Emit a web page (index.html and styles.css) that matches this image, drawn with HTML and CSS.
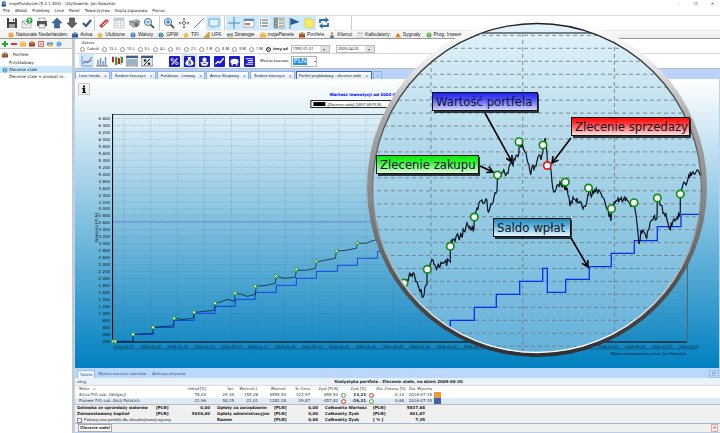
FILE: index.html
```
<!DOCTYPE html>
<html lang="pl">
<head>
<meta charset="utf-8">
<title>mojeFundusze</title>
<link rel="stylesheet" href="styles.css">
</head>
<body>
<svg class="defs" aria-hidden="true">
  <symbol id="save" viewBox="0 0 12 12"><path d="M1 1h9l1 1v9H1z" fill="#3f4348"/><path d="M3 1h6v4H3z" fill="#e9edf0"/><path d="M3 7h6v4H3z" fill="#9aa4ab"/><path d="M7 2h1v2H7z" fill="#333"/></symbol>
  <symbol id="mail" viewBox="0 0 12 12"><path d="M1 4h9v7H1z" fill="#eceff0" stroke="#8b9497" stroke-width=".6"/><path d="M1 4l4.500 4L10 4" fill="none" stroke="#8b9497" stroke-width=".8"/><circle cx="8.500" cy="3.500" r="3" fill="#22a335"/><path d="M8.500 5.500V2M7 3.300l1.500-1.500L10 3.300" stroke="#fff" fill="none"/></symbol>
  <symbol id="print" viewBox="0 0 12 12"><path d="M3 1h6v4H3z" fill="#f5f5f5" stroke="#777" stroke-width=".6"/><path d="M1 4h10v5H1z" fill="#50555a"/><path d="M3 7h6v4H3z" fill="#f4f4f4" stroke="#666" stroke-width=".6"/></symbol>
  <symbol id="up" viewBox="0 0 12 12"><path d="M6 1l5 5H8.500v5h-5V6H1z" fill="#3e6ca0" stroke="#2b4f7c" stroke-width=".6"/></symbol>
  <symbol id="down" viewBox="0 0 12 12"><path d="M6 11L1 6h2.500V1h5v5H11z" fill="#5d6266" stroke="#3b3e42" stroke-width=".6"/></symbol>
  <symbol id="check" viewBox="0 0 12 12"><path d="M2 6l3 3 5-6" fill="none" stroke="#34608f" stroke-width="2.400"/></symbol>
  <symbol id="eraser" viewBox="0 0 12 12"><path d="M1 9l7-7 3 2-7 7z" fill="#d63a30"/><path d="M4 9l5-5" stroke="#fff"/></symbol>
  <symbol id="calendar" viewBox="0 0 12 12"><path d="M1 1h10v10H1z" fill="#fafafa" stroke="#aaa" stroke-width=".6"/><path d="M1 1h10v3H1z" fill="#b9cadd"/><path d="M1 6h10M1 8.500h10M4 4v7M7.500 4v7" stroke="#bbb" stroke-width=".5"/></symbol>
  <symbol id="scan" viewBox="0 0 12 12"><path d="M1 4l8-2 3 2v4l-6 3-5-3z" fill="#a8adb0"/><path d="M1 4l5 2 6-2" fill="none" stroke="#666" stroke-width=".8"/><circle cx="8.500" cy="8" r="2" fill="#686d70"/></symbol>
  <symbol id="lens" viewBox="0 0 12 12"><path d="M7 7l4 4" stroke="#555" stroke-width="1.800"/><circle cx="5" cy="5" r="3.600" fill="#cfe7f7" stroke="#577c99"/><path d="M3.500 5h3" stroke="#2a72aa"/></symbol>
  <symbol id="lens-plus" viewBox="0 0 12 12"><path d="M7 7l4 4" stroke="#555" stroke-width="1.800"/><circle cx="5" cy="5" r="3.600" fill="#cfe7f7" stroke="#577c99"/><path d="M3 5h4M5 3v4" stroke="#2a72aa"/></symbol>
  <symbol id="move" viewBox="0 0 12 12"><path d="M6 1v10M1 6h10M4.500 2.500L6 1l1.500 1.500M4.500 9.500L6 11l1.500-1.500M2.500 4.500L1 6l1.500 1.500M9.500 4.500L11 6 9.500 7.500" fill="none" stroke="#666" stroke-width=".8"/><circle cx="6" cy="6" r="1.500" fill="#fff" stroke="#555" stroke-width=".7"/></symbol>
  <symbol id="line" viewBox="0 0 12 12"><path d="M1 11L11 1" stroke="#3a8ac0"/></symbol>
  <symbol id="speech" viewBox="0 0 12 12"><path d="M1 2h10v7H7l-2 2V9H1z" fill="#dff2fd" stroke="#4a9ac9" stroke-width=".8"/></symbol>
  <symbol id="cross" viewBox="0 0 12 12"><path d="M6 0v12M0 6h12" stroke="#4286b8"/></symbol>
  <symbol id="panel" viewBox="0 0 12 12"><path d="M1 2h10v8H1z" fill="#fff" stroke="#999" stroke-width=".7"/><path d="M1 2h10v2H1z" fill="#5b8bc0"/><path d="M2 7h5" stroke="#d23c32" stroke-width="1.500"/></symbol>
  <symbol id="list" viewBox="0 0 12 12"><path d="M1 1h10v10H1z" fill="#f5f8fa"/><path d="M4 3h6M4 6h6M4 9h6" stroke="#555"/><path d="M2 3h1M2 6h1M2 9h1" stroke="#222"/></symbol>
  <symbol id="tree" viewBox="0 0 12 12"><path d="M1 1h10v10H1z" fill="#eef0e4" stroke="#777" stroke-width=".6"/><path d="M1 1h4v10H1z" fill="#7d929c"/><path d="M2 3h2M2 6h2M2 9h2" stroke="#e5b448"/><path d="M6 3h4M6 6h4M6 9h4" stroke="#777"/></symbol>
  <symbol id="flag" viewBox="0 0 12 12"><path d="M2 1v11" stroke="#777"/><path d="M2.500 1l9 4-9 3z" fill="#1e5c9e"/></symbol>
  <symbol id="note" viewBox="0 0 12 12"><path d="M2 1l9 2-1 8-9-1z" fill="#f7ec62" stroke="#d4bf3a" stroke-width=".5"/></symbol>
  <symbol id="refresh" viewBox="0 0 12 12"><path d="M2 6V3h6M10 6v3H4" fill="none" stroke="#2f6fb4" stroke-width="1.800"/><path d="M7.500 0L11 3 7.500 6zM4.500 6L1 9l3.500 3z" fill="#2f6fb4"/></symbol>
  <symbol id="ball" viewBox="0 0 12 12"><circle cx="6" cy="6" r="5" fill="currentColor"/><path d="M3 5q3-4 6 0M4 8q3 2 4-1" stroke="#fff" fill="none" stroke-width="1.300"/></symbol>
  <symbol id="star" viewBox="0 0 12 12"><path d="M6 0l2 4 4 .5-3 3 1 4.500-4-2-4 2 1-4.500-3-3L4 4z" fill="currentColor"/></symbol>
  <symbol id="case" viewBox="0 0 12 12"><path d="M4 3V1h4v2" fill="none" stroke="currentColor"/><path d="M0 3h12v8H0z" fill="currentColor"/><path d="M0 6h12" stroke="#fff" stroke-opacity=".4"/></symbol>
  <symbol id="warn" viewBox="0 0 12 12"><path d="M6 1l6 10H0z" fill="#f0a020"/><path d="M6 4v4M6 9v1" stroke="#222" stroke-width="1.300"/></symbol>
  <symbol id="person" viewBox="0 0 12 12"><circle cx="6" cy="3" r="2.500" fill="#c98a4e"/><path d="M2 12q0-6 4-6t4 6z" fill="#4679ae"/></symbol>
  <symbol id="gold" viewBox="0 0 12 12"><path d="M1 8h4V4h3V1h3v10H1z" fill="#e4a028" stroke="#9b681c" stroke-width=".6"/></symbol>
  <symbol id="plus" viewBox="0 0 12 12"><path d="M6 0v12M0 6h12" stroke="#27a52c" stroke-width="4"/></symbol>
  <symbol id="minus" viewBox="0 0 12 12"><path d="M0 6h12" stroke="#dd3b34" stroke-width="4"/></symbol>
  <symbol id="pdf" viewBox="0 0 12 12"><path d="M1 1h10v10H1z" fill="#fff" stroke="#d33" stroke-width="1.500"/><path d="M3 9l3-6 3 5-5-1" fill="none" stroke="#d33"/></symbol>
  <symbol id="folder" viewBox="0 0 12 12"><path d="M0 3h12v6H0z" fill="#3f9fdc"/><path d="M3 6h8v5H3z" fill="#f0bd3d"/></symbol>
  <symbol id="plot" viewBox="0 0 12 12"><path d="M1 1v10h10" fill="none" stroke="#7a9bc0"/><path d="M2 9l3-3 2 1 4-5" fill="none" stroke="#b34cc2"/><path d="M2 6l4 2 5-3" fill="none" stroke="#4b8be0"/></symbol>
  <symbol id="bars" viewBox="0 0 12 12"><path d="M2 11V5M4.500 11V3M7 11V6M9.500 11V2" stroke="#6f95c9" stroke-width="1.500"/><path d="M0 11h12" stroke="#777"/></symbol>
  <symbol id="candles" viewBox="0 0 12 12"><path d="M2 1v7M6 3v7M10 1v9" stroke="#444" stroke-width=".6"/><path d="M1 2h2v5H1z" fill="#b72a24"/><path d="M4 2h2v8H4z" fill="#3e9929"/><path d="M7 3h2v6H7z" fill="#b72a24"/><path d="M10 2h2v6h-2z" fill="#3e9929"/></symbol>
  <symbol id="grid" viewBox="0 0 12 12"><path d="M0 1h12v10H0z" fill="#e6edf3" stroke="#555" stroke-width=".7"/><path d="M0 1h12v2H0z" fill="#3b5f88"/><path d="M1 5h10M1 7h10M1 9h10" stroke="#57779b"/></symbol>
  <symbol id="percent" viewBox="0 0 12 12"><path d="M0 1h12v10H0z" fill="#dfe6ec" stroke="#555" stroke-width=".7"/><path d="M0 1h12v2H0z" fill="#3b5f88"/><path d="M3 10l6-6" stroke="#222"/><circle cx="4" cy="5.500" r="1.200" fill="#222"/><circle cx="8" cy="8.700" r="1.200" fill="#222"/></symbol>
  <symbol id="b-percent" viewBox="0 0 12 12"><path d="M3 9.500l6-7" stroke="#fff" stroke-width="1.300"/><circle cx="3.500" cy="4" r="1.300" fill="none" stroke="#fff"/><circle cx="8.500" cy="8" r="1.300" fill="none" stroke="#fff"/></symbol>
  <symbol id="b-bag" viewBox="0 0 12 12"><path d="M4 1h4L7.500 3.500q3 2 3 4.500T6 10.500 1.500 8 4.500 3.500z" fill="#fff"/><path d="M7.500 5.500H5.200v1.500h2v1.700H4.500" fill="none" stroke="#1b1bc8" stroke-width=".9"/></symbol>
  <symbol id="b-coins" viewBox="0 0 12 12"><circle cx="6" cy="4" r="2.300" fill="#fff"/><path d="M1.500 7q4.500-2 9 0l-2 3.500h-5z" fill="#fff"/><path d="M4 8h4" stroke="#1b1bc8" stroke-width=".9"/></symbol>
  <symbol id="b-chart" viewBox="0 0 12 12"><path d="M1.500 9l3-3 2 1.500 4-5" fill="none" stroke="#fff" stroke-width="1.500"/></symbol>
  <symbol id="b-pig" viewBox="0 0 12 12"><ellipse cx="6" cy="6" rx="4.500" ry="3" fill="#fff"/><path d="M3.500 8v2.500M8.500 8v2.500" stroke="#fff" stroke-width="1.400"/></symbol>
  <symbol id="b-list" viewBox="0 0 12 12"><path d="M2 3h8M4 5h6M4 7h6M2 9h8" stroke="#fff"/></symbol>
</svg>

<div class="app">
  <header class="titlebar">
    <svg class="ico" viewBox="0 0 12 12"><path d="M3 1h6l1 10H1z" fill="#174f86"/><path d="M5 3h3v4H5z" fill="#8fc8e8"/></svg>
    <span class="title">mojeFundusze (5.2.1.400) - Użytkownik: Jan Kowalski</span>
    <button aria-label="Minimalizuj">–</button><button aria-label="Przywróć">❐</button><button aria-label="Zamknij">✕</button>
  </header>
  <nav class="menu">
    <a href="#">Plik</a><a href="#">Widok</a><a href="#">Przebieg</a><a href="#">Linie</a><a href="#">Panel</a><a href="#">Towarzystwo</a><a href="#">Kopia zapasowa</a><a href="#">Pomoc</a>
  </nav>
  <div class="toolbar">
    <div class="group" data-icons="save mail print up down check"></div>
    <div class="group" data-icons="eraser calendar scan lens"></div>
    <div class="group" data-icons="lens-plus move line speech*"></div>
    <div class="group" data-icons="cross* panel* list* tree* flag* note* refresh"></div>
  </div>
  <nav class="bookmarks">
    <a href="#"><svg class="ico orange"><use href="#ball"/></svg>Nationale Nederlanden</a>
    <a href="#"><svg class="ico navy"><use href="#case"/></svg>Aviva</a>
    <a href="#"><svg class="ico amber"><use href="#star"/></svg>Ulubione</a>
    <a href="#"><svg class="ico blue"><use href="#ball"/></svg>Waluty</a>
    <a href="#"><svg class="ico teal"><use href="#ball"/></svg>GPW</a>
    <a href="#"><svg class="ico amber"><use href="#star"/></svg>TFI</a>
    <a href="#"><svg class="ico"><use href="#gold"/></svg>UFK</a>
    <a href="#"><svg class="ico"><use href="#folder"/></svg>Strategie</a>
    <a href="#"><svg class="ico amber"><use href="#case"/></svg>mojePanele</a>
    <a href="#" class="on"><svg class="ico brown"><use href="#case"/></svg>Portfele</a>
    <a href="#"><svg class="ico"><use href="#person"/></svg>Klienci</a>
    <a href="#"><svg class="ico"><use href="#calendar"/></svg>Kalkulatory</a>
    <a href="#"><svg class="ico"><use href="#warn"/></svg>Sygnały</a>
    <a href="#"><svg class="ico green"><use href="#ball"/></svg>Prog. Inwest.</a>
  </nav>

  <div class="body">
    <aside class="sidebar">
      <div class="side-tools">
        <button aria-label="Dodaj"><svg class="ico"><use href="#plus"/></svg></button>
        <button aria-label="Usuń"><svg class="ico"><use href="#minus"/></svg></button>
        <button aria-label="Złoto"><svg class="ico amber"><use href="#case"/></svg></button>
        <button aria-label="Portfel"><svg class="ico brown"><use href="#case"/></svg></button>
        <button aria-label="PDF"><svg class="ico"><use href="#pdf"/></svg></button>
        <button aria-label="Katalog"><svg class="ico"><use href="#folder"/></svg></button>
        <button aria-label="Odśwież"><svg class="ico sky"><use href="#ball"/></svg></button>
      </div>
      <ul class="tree">
        <li><svg class="ico brown"><use href="#case"/></svg><span class="root">Portfele</span></li>
        <li><i class="ico"></i>Przykładowy</li>
        <li class="on"><svg class="ico sky"><use href="#ball"/></svg>Zlecenie stałe</li>
        <li><i class="ico"></i>Zlecenie stałe + produkt in...</li>
      </ul>
    </aside>

    <main class="content">
      <div class="range" role="group" aria-labelledby="range-name">
        <div id="range-name" class="range-name">Zakres</div>
        <div class="range-row">
        <label><input type="radio" name="r">Całość</label>
        <label><input type="radio" name="r">15 L</label>
        <label><input type="radio" name="r">10 L</label>
        <label><input type="radio" name="r">5 L</label>
        <label><input type="radio" name="r">4 L</label>
        <label><input type="radio" name="r">3 L</label>
        <label><input type="radio" name="r">2 L</label>
        <label><input type="radio" name="r">1 R</label>
        <label><input type="radio" name="r">6 M</label>
        <label><input type="radio" name="r">3 M</label>
        <label><input type="radio" name="r">1 M</label>
        <label><input type="radio" name="r" checked><b>inny od</b></label>
        <span class="date"><input aria-label="Data od" value="1990-01-01"><button aria-label="Wybierz datę od">▾</button></span>
        <span class="date"><input aria-label="Data do" value="2009-04-20"><button aria-label="Wybierz datę do">▾</button></span>
        </div>
      </div>
      <div class="charttools">
        <div class="group" data-icons="plot* bars candles grid percent"></div>
        <div class="group blues" data-icons="b-percent b-bag* b-coins b-chart b-pig b-list"></div>
        <label class="currency">Waluta bazowa <select><option>PLN</option></select></label>
      </div>
      <div class="tabs">
        <button>Linie trendu<i>×</i></button><button>Średnie kroczące<i>×</i></button><button>Fundusze - Liniowy<i>×</i></button><button>Arena Skupiowy<i>×</i></button><button>Średnie kroczące<i>×</i></button><button class="on">Portfel przykładowy - zlecenie stałe<i>×</i></button><button class="add">▫</button>
      </div>
      <section class="chart">
        <svg id="chart" viewBox="76 79 643 288" role="img" aria-label="Wartość inwestycji"></svg>
      </section>

      <section class="stats">
        <div class="stat-tabs"><button class="on">Tabela</button><button>Wykres wartości udziałów</button><button>Alokacja aktywów</button><button class="corner" aria-label="Odepnij">◰</button></div>
        <div class="stat-title"><span>ukryj</span><b>Statystyka portfela - Zlecenie stałe, na dzień 2009-04-20</b></div>
        <table class="funds">
          <colgroup><col class="w110"><col class="w24"><col class="w28"><col class="w24"><col class="w28"><col class="w24"><col class="w28"><col class="w10"><col class="w18"><col class="w10"><col class="w28"><col class="w28"><col class="w10"><col></colgroup>
          <thead><tr><th class="l">Walor &nbsp; ▵</th><th>Udział [%]</th><th>Szt.</th><th>Wartość J.</th><th>Wartość</th><th>Śr. Cena</th><th>Zysk [PLN]</th><th></th><th>Zysk [%]</th><th></th><th>Ost. Zmiana [%]</th><th>Ost. Wycena</th><th></th><th></th></tr></thead>
          <tbody>
            <tr><td class="l">Aviva FIO sub. Obligacji</td><td>78,04</td><td>29,34</td><td>155,28</td><td>4555,50</td><td>123,97</td><td>859,50</td><td><i class="dot up"></i></td><td><b>23,23</b></td><td><i class="dot dn"></i></td><td>-0,14</td><td>2016-07-15</td><td><i class="sw o"></i></td><td></td></tr>
            <tr><td class="l">Pioneer FIO sub. Akcji Polskich</td><td>21,96</td><td>58,25</td><td>22,01</td><td>1282,18</td><td>29,87</td><td>-457,82</td><td><i class="dot dn"></i></td><td><b>-26,31</b></td><td><i class="dot up"></i></td><td>0,68</td><td>2016-07-15</td><td><i class="sw b"></i></td><td></td></tr>
          </tbody>
        </table>
        <table class="sums">
          <colgroup><col class="w76"><col class="w14"><col class="w44"><col class="w62"><col class="w14"><col class="w30"><col class="w52"><col class="w14"><col class="w40"><col></colgroup>
          <tr><td>Gotówka ze sprzedaży walorów</td><td>[PLN]</td><td class="r">0,00</td><td class="p">Opłaty za zarządzanie</td><td>[PLN]</td><td class="r">0,00</td><td class="p">Całkowita Wartość</td><td>[PLN]</td><td class="r">5837,68</td><td></td></tr>
          <tr><td>Zainwestowany kapitał</td><td>[PLN]</td><td class="r">5436,00</td><td class="p">Opłaty administracyjne</td><td>[PLN]</td><td class="r">0,00</td><td class="p">Całkowity Zysk</td><td>[PLN]</td><td class="r">401,67</td><td></td></tr>
          <tr><td colspan="3"><label class="tick"><input type="checkbox">Pokazuj stan portfela dla aktualnej/nowej wyceny</label></td><td class="p">Razem</td><td>[PLN]</td><td class="r">0,00</td><td class="p">Całkowity Zysk</td><td>[ % ]</td><td class="r">7,39</td><td></td></tr>
        </table>
        <footer class="status"><button>[Zlecenie stałe]</button><button class="close" aria-label="Zamknij">✕</button></footer>
      </section>
    </main>
  </div>

  <div class="magnifier">
    <svg id="magnifier" viewBox="366 17 342 342" role="img" aria-label="Powiększenie wykresu"></svg>
  </div>
</div>
<script src="script.js"></script>
</body>
</html>
```
FILE: styles.css
```
* { box-sizing: border-box; }
html, body { height: 100%; }
body { margin: 0; font: 4px/6px "Noto Sans", sans-serif; color: #222; background: #fff; overflow: hidden; }
button, input, select { font: inherit; color: inherit; margin: 0; padding: 0; border: 0; background: none; border-radius: 0; }
a { color: inherit; text-decoration: none; }
i { font-style: normal; }
.defs { position: absolute; width: 0; height: 0; }
.app { position: relative; display: flex; flex-direction: column; min-height: 100%; }
.ico { width: 6px; height: 6px; flex: none; display: block; }

.titlebar { display: flex; align-items: center; height: 7px; padding-left: 1px; gap: 2px; font-family: "DejaVu Sans", sans-serif; }
.titlebar .title { flex: 1; }
.titlebar button { width: 15px; line-height: 6px; }
.menu { display: flex; gap: 5px; height: 8px; padding-left: 3px; align-items: center; font-family: "DejaVu Sans", sans-serif; }

.toolbar { display: flex; height: 16px; padding-left: 4px; gap: 1px; border-top: 1px solid #d9d9d9; border-bottom: 1px solid #ececec; }
.group { display: flex; padding-right: 3px; align-items: stretch; }
.toolbar .group { border-right: 1px solid #ccc; }
.toolbar .group:last-child { padding-right: 20px; }
.group button { width: 15px; display: grid; place-items: center; }
.group svg { width: 12px; height: 12px; display: block; }
.group button.on { background: #cfeafc; }
.toolbar .group:first-child { padding-right: 0; }

.bookmarks { display: flex; height: 8px; gap: 5px; padding-left: 8px; align-items: center; font: 5px/7px "Liberation Sans", sans-serif; background: linear-gradient(#fafafa, #ececec); border-bottom: 1px solid #999; white-space: nowrap; }
.bookmarks a { display: flex; align-items: center; gap: 2px; }
.bookmarks .on { background: #fff; }
.orange { color: #f28a1c; } .navy { color: #24559c; } .amber { color: #f2b43c; } .blue { color: #2b78c8; }
.teal { color: #287f96; } .brown { color: #9c4a1c; } .green { color: #55a630; } .sky { color: #3f92e0; }

.body { flex: 1; display: grid; grid-template-columns: 74px minmax(0, 1fr); }
.sidebar { display: flex; flex-direction: column; border-right: 2px solid #c9c9c9; font-family: "DejaVu Sans", sans-serif; }
.side-tools { display: flex; gap: 2px; height: 10px; padding-left: 2px; align-items: center; background: #f2f2f2; border-bottom: 1px solid #c4c4c4; }
.side-tools .ico { margin-right: 1px; }
.tree { list-style: none; margin: 0; padding: 2px 0 0; white-space: nowrap; }
.tree li { display: flex; height: 7px; gap: 1px; align-items: center; padding-left: 2px; }
.tree li:first-child { height: 8px; }
.tree li.on { background: #cde8fb; }
.root { padding-left: 4px; }

.content { display: flex; flex-direction: column; border-left: 1px solid #b9d3f8; }
.range { height: 15px; padding: 1px 5px 0; border-bottom: 1px solid #d6d6d6; white-space: nowrap; }
.range-name { padding-left: 2px; line-height: 5px; }
.range-row { display: flex; align-items: center; gap: 3px; height: 8px; }
.range label { display: flex; align-items: center; gap: 2px; }
input[type=radio] { appearance: none; width: 5px; height: 5px; border: 1px solid #999; border-radius: 50%; background: #fff; }
input[type=radio]:checked { background: #111; box-shadow: inset 0 0 0 1px #fff; border-color: #444; }
.date { display: flex; width: 39px; height: 8px; border: 1px solid #bbb; margin-right: 3px; }
.date input { width: 28px; padding-left: 1px; line-height: 6px; }
.date button { flex: 1; line-height: 5px; background: #e2e2e2; color: #555; }
.charttools { display: flex; height: 15px; padding-left: 4px; border-bottom: 1px solid #bbb; }
.charttools .group:first-child { padding-right: 13px; }
.blues svg { width: 11px; height: 11px; background: #1c1ccb; border-radius: 1px; }
.currency { display: flex; align-items: center; gap: 3px; }
.currency select { width: 26px; height: 11px; padding-left: 1px; border: 1px solid #b5b5b5; font-size: 7px; color: #fff; appearance: none; background: linear-gradient(#2c8fe6, #2c8fe6) 1px 1px / 14px 7px no-repeat, conic-gradient(from -45deg at 50% 100%, #777 90deg, transparent 0) 22px 4px / 2px 1px no-repeat, #fff; }
.tabs { display: flex; gap: 1px; height: 10px; padding-top: 2px; background: #b9d3fa; font: 4px/6px "Liberation Sans", sans-serif; }
.tabs button { display: flex; gap: 4px; align-items: center; padding: 0 2px 0 3px; background: linear-gradient(#fff, #dcebfd); border: 1px solid #8fb2e4; border-bottom: 0; white-space: nowrap; }
.tabs i { color: #777; font-size: 5px; }
.tabs .on { border-color: #3f66ad; padding: 0 3px 0 2px; }
.tabs .add { background: none; }
.chart { flex: 1; background: linear-gradient(#fff, #0080c0); border-right: 1px solid #b9d3f8; }
.chart svg { display: block; width: 100%; height: auto; }

.stats { background: #f0f0f0; }
.stat-tabs { display: flex; height: 10px; padding: 2px 1px 0 2px; background: #bbd7fd; color: #31557f; font-family: "Noto Sans", sans-serif; }
.stat-tabs button { padding: 0 3px; }
.stat-tabs .on { background: #e9f2fd; border: 1px solid #9dbde8; border-bottom: 0; padding: 0 2px; }
.stat-tabs .corner { margin-left: auto; padding: 0 2px; border: 1px solid #9dbde8; }
.stat-title { display: grid; grid-template-columns: 1fr auto 1fr; height: 8px; line-height: 8px; padding-left: 2px; background: #e8f1fc; border-bottom: 1px solid #ddd; }
.stat-title b { font-family: "DejaVu Sans", sans-serif; }
table { border-collapse: collapse; table-layout: fixed; width: 100%; }
td, th { padding: 0; font-weight: normal; white-space: nowrap; }
.funds { background: #fff; color: #333; }
.funds td, .funds th { text-align: right; height: 6px; line-height: 6px; }
.funds tbody { font-family: "DejaVu Sans", sans-serif; }
.funds .l { text-align: left; padding-left: 4px; }
.funds tbody tr:last-child { background: #dfeaf7; }
.dot, .sw { display: block; height: 5px; margin: 0 auto; width: 5px; border-radius: 50%; border: 1px solid; background: #fff; }
.dot.up { border-color: #4caf3c; } .dot.dn { border-color: #d8382c; }
.sw { border: 0; border-radius: 0; width: 7px; height: 6px; }
.o { background: #f09a35; } .b { background: #4262a8; }
.w10 { width: 10px; } .w14 { width: 14px; } .w18 { width: 18px; } .w24 { width: 24px; } .w28 { width: 28px; } .w30 { width: 32px; }
.w40 { width: 40px; } .w44 { width: 42px; } .w52 { width: 53px; } .w62 { width: 62px; } .w76 { width: 79px; } .w110 { width: 107px; }
.sums { border-top: 1px solid #bbb; font-family: "DejaVu Sans", sans-serif; }
.sums td { height: 6px; font-weight: bold; padding-left: 2px; }
.sums .r { text-align: right; padding: 0; }
.sums .p { padding-left: 7px; }
.tick { display: flex; gap: 2px; align-items: center; font: 4px/6px "Liberation Sans", sans-serif; }
input[type=checkbox] { appearance: none; width: 5px; height: 5px; border: 1px solid #888; background: #fff; }
.status { display: flex; justify-content: space-between; height: 10px; padding: 1px 2px 1px 3px; border-top: 1px solid #9ab8e0; border-bottom: 1px solid #b9cce8; align-items: center; }
.status button { font-weight: bold; padding: 0 1px; background: #fff; border: 1px solid #aaa; }
.status .close { color: #e03a24; background: none; border-color: #e9a79d; }

.magnifier { position: absolute; left: 366px; top: 17px; width: 342px; }
.magnifier svg { display: block; width: 100%; }

.tiny { font: 4px "Liberation Sans", sans-serif; fill: #10222e; }
.axis { font: 4px "DejaVu Sans", sans-serif; fill: #111; }
.chart-title { font: bold 4px "DejaVu Sans", sans-serif; fill: #00f; }
.callout { font: 13px "DejaVu Sans Condensed", "DejaVu Sans", sans-serif; fill: #10142a; }
.gridline { stroke: #57707c; stroke-opacity: .5; stroke-width: .6; stroke-dasharray: 1 1; fill: none; }
.lens-grid { stroke: #6d777d; stroke-opacity: .8; stroke-width: 1; stroke-dasharray: 4 3; fill: none; }
.value { stroke: #07131c; fill: none; }
.paid { stroke: #0a2cf0; fill: none; }
```
FILE: script.js
```
document.querySelectorAll('[data-icons]').forEach(group => {
  group.innerHTML = group.dataset.icons.split(' ').map(name => {
    const id = name.replace('*', '');
    return `<button aria-label="${id}"${name.endsWith('*') ? ' class="on"' : ''}><svg><use href="#${id}"/></svg></button>`;
  }).join('');
});

const join = points => points.map(p => p.join(' ')).join('L');

// Stepped line: each entry is [x, y], the level taken from x on.
const steps = (list, end) => 'M' + list.map(([x, y], i) => `${i ? 'V' : x + ' '}${y}H${(list[i + 1] || [end])[0]}`).join('');

// Adds small alternating swings between the data points.
function jagged(points) {
  let seed = 7, out = [points[0]];
  for (let i = 1; i < points.length; i++) {
    const [x0, y0] = points[i - 1], [x1, y1] = points[i];
    const n = Math.floor((x1 - x0) / 0.8);
    for (let k = 1; k < n; k++) {
      seed = (seed * 73 + 41) % 997;
      out.push([(x0 + (x1 - x0) * k / n).toFixed(1), (y0 + (y1 - y0) * k / n + (seed / 997 - 0.5) * 8).toFixed(1)]);
    }
    out.push(points[i]);
  }
  return out;
}

function drawChart() {
  let s = '';
  for (let i = 0; i <= 32; i++) {
    const y = 118.3 + i * 6.96, v = 6600 - i * 200;
    s += `<path class="gridline" d="M114 ${y}H687"/><text class="axis" x="111" y="${y + 1.5}" text-anchor="end">${v >= 1000 ? Math.floor(v / 1000) + ' ' + String(v % 1000).padStart(3, '0') : v}</text>`;
  }
  const start = Date.UTC(2002, 4, 27);
  for (let i = 0; i < 22; i++) {
    const x = 124.7 + i * 26.87;
    const d = new Date(start + i * 120 * 864e5).toISOString().slice(0, 10);
    if (i < 21) s += `<path class="gridline" d="M${x} 114V341"/>`;
    s += `<text class="tiny" x="${x}" y="348" text-anchor="middle">${d}</text>`;
  }
  s += '<path d="M114 348.500H697" stroke="#10222e" stroke-width=".4"/>';
  s += '<path d="M113 114.500H687.500V341" fill="none" stroke="#56646c" stroke-width="1"/><path d="M113.500 114V341.500H687" fill="none" stroke="#000"/>';
  s += '<path d="M114 221.500H705" stroke="#7277d8" stroke-width=".8"/>';
  s += `<path class="paid" stroke-width=".8" d="${steps([[114, 341], [134, 334], [154, 327], [175, 320], [195, 313], [216, 306], [236, 299], [256, 292], [277, 285], [297, 278], [317, 271], [338, 265], [358, 258], [378, 251]], 400)}"/>`;
  s += `<path class="value" stroke-width=".7" d="M${join([[114, 341], [134, 341], [134, 334], [154, 333], [154, 327], [164, 326], [170, 326], [174, 325], [175, 318], [184, 319], [194, 318], [195, 312], [205, 311], [215, 310], [216, 303], [223, 301], [228, 299], [235, 301], [236, 293], [242, 294], [248, 296], [256, 294], [257, 286], [267, 285], [276, 283], [277, 276], [285, 278], [296, 277], [297, 270], [306, 270], [316, 268], [317, 262], [325, 260], [336, 258], [337, 251], [346, 250], [357, 248], [358, 243], [366, 243], [378, 239], [390, 236]])}"/>`;
  [[114, 341], [116, 341], [134, 334], [154, 327], [175, 318], [195, 312], [216, 303], [236, 293], [256, 286], [277, 276], [297, 269], [317, 261], [337, 251], [358, 243]]
    .forEach(([x, y]) => { s += `<circle cx="${x}" cy="${y}" r="1.600" fill="#fff" stroke="#2ca02c"/>`; });
  s += '<text class="axis" transform="translate(99 242) rotate(-90)">Wartości [PLN]</text>';
  s += '<text class="chart-title" x="330" y="96">Wartość inwestycji od 2002-01-01</text>';
  s += '<rect x="311.500" y="100.500" width="80" height="7" fill="#fff" stroke="#222"/><rect x="314" y="102" width="12" height="4"/><text class="tiny" x="328" y="105.500">[Zlecenie stałe] (5837,68 PLN)</text>';
  s += '<text class="tiny" x="686" y="355" text-anchor="end" font-style="italic">Wykres przygotowany przez: Jan Kowalski</text>';
  s += '<rect x="79.500" y="83.500" width="11" height="11" rx="1" fill="#f2f2f2" stroke="#c6c6c6"/><path d="M84 85.500h2v2h-2zM83 88h3v4h1v1h-4v-1h1v-3h-1z" fill="#111"/>';
  document.getElementById('chart').innerHTML = s;
}

function callout(x, y, w, text, color) {
  return `<rect x="${x + 2}" y="${y + 2}" width="${w}" height="19" fill="#000" fill-opacity=".75"/>
    <rect x="${x + .5}" y="${y + .5}" width="${w}" height="18" fill="url(#${color})" stroke="#111"/>
    <text class="callout" x="${x + 4}" y="${y + 14}">${text}</text>`;
}

function arrow(x0, y0, x1, y1) {
  const a = Math.atan2(y1 - y0, x1 - x0);
  const tip = t => `${x1 - 7 * Math.cos(a + t)} ${y1 - 7 * Math.sin(a + t)}`;
  return `<path d="M${x0} ${y0}L${x1} ${y1}M${tip(.5)}L${x1} ${y1}L${tip(-.5)}" fill="none" stroke="#000" stroke-width="1.600"/>`;
}

function drawMagnifier() {
  const grad = (id, stops) => `<linearGradient id="${id}" x2="0" y2="1">${stops.map(([o, c]) => `<stop offset="${o}" stop-color="${c}"/>`).join('')}</linearGradient>`;
  let s = '<defs><clipPath id="glass"><circle cx="537" cy="188" r="165"/></clipPath>'
    + grad('sky', [[0, '#e4f3fa'], [.3, '#bcdeed'], [.6, '#94c9e3'], [1, '#62b1da']])
    + grad('rim', [[0, '#fff'], [.12, '#eee'], [.3, '#aaa'], [.55, '#858585'], [.8, '#505050'], [1, '#303030']])
    + grad('edge', [[0, '#222'], [.45, '#666'], [.7, '#aaa'], [1, '#fff']])
    + grad('c-blue', [[0, '#1a1af5'], [.35, '#4b4bf8'], [1, '#d8dcff']])
    + grad('c-green', [[0, '#0be80b'], [.4, '#35f035'], [1, '#eaffea']])
    + grad('c-red', [[0, '#f00'], [.35, '#ff3b3b'], [1, '#ffe8e8']])
    + grad('c-cyan', [[0, '#1f85bb'], [.4, '#63b3da'], [1, '#eaf7fd']]) + '</defs>';
  s += '<circle cx="537" cy="187" r="170" fill="url(#rim)"/><g clip-path="url(#glass)"><rect x="370" y="20" width="336" height="336" fill="url(#sky)"/>';
  s += '<path d="M400 33H610" stroke="#4f5a60" stroke-width="1.500"/>';
  for (let i = 0; i < 25; i++) s += `<path class="lens-grid" d="M370 ${(35.4 + i * 12.95).toFixed(1)}H705"/>`;
  [431, 522.7, 614.4].forEach(x => { s += `<path class="lens-grid" d="M${x} 33V356"/>`; });
  s += `<path class="paid" stroke-width="1.300" d="M450.300 330V320${steps([[450.3, 320.3], [474.3, 307.3], [496.3, 294.3], [519.7, 281.3], [542.7, 268.3], [547.3, 292.3], [565.7, 279.3], [589.3, 266.7], [611.3, 253.3], [634.3, 240.7], [657.3, 226.7], [681, 214.3]], 705)}"/>`;
  const line = [[404, 283], [409, 276], [413, 273], [415, 278], [418, 285], [421, 289], [422, 297], [424, 295], [425, 287], [427, 284], [427, 269], [430, 265], [433, 260], [435, 265], [440, 267], [444, 263], [450.3, 262], [450.3, 246], [453, 239], [456, 237], [460, 237], [464, 231], [467, 223], [469, 228], [474, 229], [474.3, 217], [477, 208], [479, 203], [482, 200], [484, 203], [486, 199], [488.7, 212], [491, 204], [494, 197], [497, 190], [497.5, 175], [503, 172], [507, 173], [509, 167], [512, 163], [515, 160], [517, 155], [519, 153], [519, 142], [523, 147], [526, 153], [528, 163], [530.7, 175], [532, 167], [535, 166], [537, 161], [539, 155], [541, 160], [543, 152], [543, 145], [545, 138], [547, 153], [547.5, 165], [551, 170], [552, 182], [554, 192], [557, 185], [560, 182], [562, 187], [565, 190], [565.3, 182], [568, 195], [570, 206], [573, 197], [577, 198], [579, 203], [583, 209], [587, 201], [588.7, 195], [588.7, 188], [592, 195], [597, 191], [602, 197], [605, 202], [608, 209], [611, 221], [611.5, 209], [615, 203], [618, 198], [623, 201], [627, 200], [630, 204], [634, 203], [636, 215], [637.5, 228], [639, 244], [641, 230], [644, 232], [646.7, 239], [650, 223], [653, 220], [657, 218], [657.3, 198], [661, 205], [664, 213], [667, 220], [669.5, 229], [672, 225], [675, 221], [677, 217], [680.3, 212], [680.3, 194], [682, 188], [685, 183], [688, 179], [692, 173], [695, 174], [697, 170], [700, 175], [704, 172]];
  s += `<path class="value" stroke-width="1.200" d="M${join(jagged(line))}"/>`;
  s += arrow(485, 113, 512, 162) + arrow(480, 166, 493, 172) + arrow(571, 138, 552, 163) + arrow(571, 238, 588, 267);
  [[404, 283], [427.3, 269.3], [450.3, 246.3], [474.3, 217], [497.5, 175], [519, 141.7], [543, 145], [565.3, 182], [588.5, 188], [611.5, 208.7], [634, 202.7], [657.3, 198], [680.3, 194]]
    .forEach(([x, y]) => { s += `<circle cx="${x}" cy="${y}" r="3.700" fill="#fff" stroke="#128c12" stroke-width="1.700"/>`; });
  s += '<circle cx="547.300" cy="165.500" r="3.700" fill="#fff" stroke="#e81212" stroke-width="1.700"/></g>';
  s += '<circle cx="537" cy="188" r="164.500" fill="none" stroke="url(#edge)" stroke-width="1.300"/>';
  s += callout(432, 92, 105, 'Wartość portfela', 'c-blue') + callout(376, 155, 102, 'Zlecenie zakupu', 'c-green')
    + callout(571, 117, 118, 'Zlecenie sprzedaży', 'c-red') + callout(493, 218, 77, 'Saldo wpłat', 'c-cyan');
  document.getElementById('magnifier').innerHTML = s;
}

drawChart();
drawMagnifier();
```
